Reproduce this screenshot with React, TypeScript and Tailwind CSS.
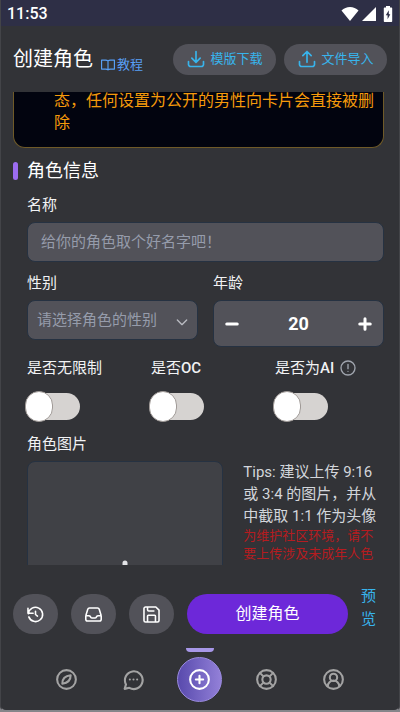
import { useState } from "react";
import type { ReactNode } from "react";

const Icon = ({ className, children }: { className: string; children: ReactNode }) => (
    <svg
        viewBox="0 0 24 24"
        fill="none"
        stroke="currentColor"
        strokeWidth="2"
        strokeLinecap="round"
        strokeLinejoin="round"
        aria-hidden="true"
        className={className}
    >
        {children}
    </svg>
);

const StatusBar = () => (
    <div className="flex h-[26px] shrink-0 items-center justify-between bg-[#2e2f46] px-[6px] pt-[2px] text-white">
        <span className="text-base font-medium leading-6">11:53</span>
        <div className="flex items-center gap-[3px]">
            <svg viewBox="0 0 18 14" className="h-[14px] w-[18px]" fill="currentColor" aria-hidden="true">
                <path d="M9 14 0.5 3.4C2.8 1.3 5.800 0 9 0s6.200 1.300 8.500 3.400z" />
            </svg>
            <svg viewBox="0 0 14 14" className="h-[14px] w-[14px]" fill="currentColor" aria-hidden="true">
                <path d="M14 0v14H0z" />
            </svg>
            <svg viewBox="0 0 10 16" className="ml-1 h-4 w-[10px]" aria-hidden="true">
                <path fill="currentColor" d="M3 0h4v1.500h1.200c.6 0 1 .4 1 1V15c0 .6-.4 1-1 1H1.800c-.6 0-1-.4-1-1V2.500c0-.6.4-1 1-1H3z" />
                <path fill="#2e2f46" d="M5.800 4.200 2.800 9.300h1.800v4L7.300 8.200H5.800z" />
            </svg>
        </div>
    </div>
);

const Header = () => (
    <header className="flex h-[66px] shrink-0 items-center justify-between px-3">
        <div className="flex items-center gap-2">
            <h1 className="text-xl leading-7 text-white">创建角色</h1>
            <a href="#guide" className="mt-3 flex items-center gap-[2px] text-[13px] leading-5 text-[#589ff5]">
                <Icon className="h-[14px] w-[14px]">
                    <path d="M12 5v15M12 5c-1-1-2-1.500-4-1.500H1V19h7c2 0 3 .5 4 1.500 1-1 2-1.500 4-1.500h7V3.500h-7c-2 0-3 .5-4 1.500z" />
                </Icon>
                教程
            </a>
        </div>
        <div className="flex gap-2 text-[13px] leading-5 text-[#38b4ec]">
            <button className="flex h-[31px] w-[103px] items-center justify-center gap-1 rounded-full bg-[#525259]">
                <Icon className="h-5 w-5">
                    <path d="M3 15v3.500A2.500 2.500 0 0 0 5.500 21h13a2.500 2.500 0 0 0 2.500-2.500V15M7 11l5 5 5-5M12 3v13" />
                </Icon>
                模版下载
            </button>
            <button className="flex h-[31px] w-[103px] items-center justify-center gap-1 rounded-full bg-[#525259]">
                <Icon className="h-5 w-5">
                    <path d="M3 15v3.500A2.500 2.500 0 0 0 5.500 21h13a2.500 2.500 0 0 0 2.500-2.500V15M7 8l5-5 5 5M12 3v13" />
                </Icon>
                文件导入
            </button>
        </div>
    </header>
);

const Toggle = ({ id, label, children }: { id: string; label: ReactNode; children?: ReactNode }) => (
    <div>
        <div className="flex items-center gap-[6px]">
            <label htmlFor={id} className="whitespace-nowrap">{label}</label>
            {children}
        </div>
        <input
            id={id}
            type="checkbox"
            className="mt-[13px] block h-[27px] w-[53px] appearance-none rounded-full bg-[#d6d3d1] before:-ml-[2px] before:-mt-[2px] before:block before:h-[31px] before:w-7 before:rounded-full before:border before:border-[#a09a97] before:bg-white checked:bg-violet-500 checked:before:ml-[27px]"
        />
    </div>
);

const CharacterForm = () => {
    const [age, setAge] = useState(20);

    return (
        <section className="pt-[9px]">
            <h2 className="flex h-7 items-center gap-[9px] text-lg leading-7 text-white">
                <span className="h-[18px] w-[5px] rounded-full bg-[#9c6cf0]" />
                角色信息
            </h2>

            <div className="pl-[14px] text-[15px] leading-6 text-[#f1f2f4]">
                <label htmlFor="name" className="mt-2 block">名称</label>
                <input
                    id="name"
                    type="text"
                    placeholder="给你的角色取个好名字吧！"
                    className="mt-[5px] block h-10 w-full rounded-lg border border-[#263242] bg-[#525259] px-[13px] placeholder:text-[#969cab]"
                />

                <div className="mt-[9px] grid grid-cols-2 gap-[15px]">
                    <div>
                        <label htmlFor="gender" className="block">性别</label>
                        <div className="relative mt-[5px]">
                            <select
                                id="gender"
                                defaultValue=""
                                className="block h-10 w-full appearance-none rounded-lg border border-[#263242] bg-[#525259] pl-[9px] pr-7 text-[#969cab]"
                            >
                                <option value="">请选择角色的性别</option>
                                <option value="male">男</option>
                                <option value="female">女</option>
                            </select>
                            <Icon className="pointer-events-none absolute right-2 top-[14px] h-4 w-4 text-[#b9bbc2]">
                                <path d="m5 9 7 7 7-7" />
                            </Icon>
                        </div>
                    </div>
                    <div>
                        <label htmlFor="age" className="block">年龄</label>
                        <div className="mt-[5px] flex h-[47px] items-center justify-between rounded-lg border border-[#263242] bg-[#525259] px-[9px] text-white">
                            <button aria-label="减少" onClick={() => setAge(age - 1)}>
                                <Icon className="h-[18px] w-[18px]">
                                    <path strokeWidth="4" d="M5 12h14" />
                                </Icon>
                            </button>
                            <input
                                id="age"
                                type="text"
                                inputMode="numeric"
                                value={age}
                                onChange={(e) => setAge(Number(e.target.value) || 0)}
                                className="w-16 bg-transparent text-center text-lg font-bold"
                            />
                            <button aria-label="增加" onClick={() => setAge(age + 1)}>
                                <Icon className="h-[18px] w-[18px]">
                                    <path strokeWidth="4" d="M5 12h14M12 5v14" />
                                </Icon>
                            </button>
                        </div>
                    </div>
                </div>

                <div className="mt-[9px] grid grid-cols-3 gap-[15px]">
                    <Toggle id="unlimited" label="是否无限制" />
                    <Toggle id="oc" label={<>是否<span className="font-medium">OC</span></>} />
                    <Toggle id="ai" label={<>是否为<span className="font-medium">AI</span></>}>
                        <Icon className="h-4 w-4 shrink-0 text-[#a0a5ae]">
                            <circle cx="12" cy="12" r="10.500" />
                            <path d="M12 6.500v6.500M12 17v.01" />
                        </Icon>
                    </Toggle>
                </div>

                <h3 className="mt-3">角色图片</h3>
                <div className="mt-[5px] flex gap-5">
                    <button
                        aria-label="上传图片"
                        className="flex h-[240px] w-[55%] shrink-0 items-center justify-center rounded-lg border border-[#263242] bg-[#404146] text-[#e2e3e6]"
                    >
                        <svg viewBox="0 0 44 44" className="h-11 w-11" stroke="currentColor" strokeWidth="5" strokeLinecap="round" aria-hidden="true">
                            <path d="M22 4v36M4 22h36" />
                        </svg>
                    </button>
                    <div className="whitespace-nowrap text-[#d3d6db]">
                        <p className="leading-[22px]">
                            Tips: 建议上传 9:16
                            <br />
                            或 3:4 的图片，并从
                            <br />
                            中截取 1:1 作为头像
                        </p>
                        <p className="text-[13px] leading-[18px] text-[#b51c20]">
                            为维护社区环境，请不
                            <br />
                            要上传涉及未成年人色
                        </p>
                    </div>
                </div>
            </div>
        </section>
    );
};

const ActionBar = () => (
    <div className="flex h-[83px] shrink-0 items-end gap-[13px] px-3 pb-[14px] pt-5 text-base text-white">
        <button aria-label="历史" className="flex h-10 w-[45px] items-center justify-center rounded-full bg-[#525259]">
            <Icon className="h-[19px] w-[19px]">
                <path d="M12 8v4l2.500 2M3.050 11a9 9 0 1 1 .5 4M2.500 4v6.500H9" />
            </Icon>
        </button>
        <button aria-label="草稿箱" className="flex h-10 w-[45px] items-center justify-center rounded-full bg-[#525259]">
            <Icon className="h-[19px] w-[19px]">
                <path d="M2.250 13.500h3.860a2.250 2.250 0 0 1 2 1.240l.26.520a2.250 2.250 0 0 0 2 1.240h3.260a2.250 2.250 0 0 0 2-1.240l.26-.520a2.250 2.250 0 0 1 2-1.240h3.860M2.250 13.800V18a2.250 2.250 0 0 0 2.250 2.250h15A2.250 2.250 0 0 0 21.750 18v-4.200c0-.23-.03-.45-.1-.66L19.240 5.300A2.250 2.250 0 0 0 17.090 3.750H6.910A2.250 2.250 0 0 0 4.760 5.300L2.350 13.140c-.07.21-.1.430-.1.660z" />
            </Icon>
        </button>
        <button aria-label="保存" className="flex h-10 w-[45px] items-center justify-center rounded-full bg-[#525259]">
            <Icon className="h-[19px] w-[19px]">
                <path d="M17.500 2.500H4.500a2 2 0 0 0-2 2v15a2 2 0 0 0 2 2h15a2 2 0 0 0 2-2V6.500zM7 21.500v-7.500a1 1 0 0 1 1-1h8a1 1 0 0 1 1 1v7.500M7 2.500V6a1.500 1.500 0 0 0 1.500 1.500H15" />
            </Icon>
        </button>
        <button className="h-10 flex-1 rounded-full bg-[#6d28d9] leading-6">创建角色</button>
        <button className="w-[26px] self-start pr-[9px] text-left text-[15px] leading-[23px] text-[#38b4ec]">预览</button>
    </div>
);

const BottomNav = () => (
    <nav className="grid h-[62px] shrink-0 grid-cols-5 justify-items-center px-8 text-[#a3a3a3]">
        <a href="#explore" aria-label="探索" className="flex items-center">
            <Icon className="h-[25px] w-[25px]">
                <path d="M8 16c0-5 2.500-7.500 8-8 0 5-2.500 7.500-8 8z" />
                <circle cx="12" cy="12" r="9" />
            </Icon>
        </a>
        <a href="#chat" aria-label="聊天" className="flex items-center">
            <Icon className="h-[25px] w-[25px]">
                <path d="M3.500 21l1.300-4.300A8.500 8.500 0 1 1 8 20zM8.500 12v.01M12 12v.01M15.500 12v.01" />
            </Icon>
        </a>
        <a href="#create" aria-label="创建" aria-current="page" className="flex flex-col items-center gap-[5px]">
            <span className="h-1 w-7 rounded-b-full bg-[#a797e8]" />
            <span className="flex h-[45px] w-[45px] items-center justify-center rounded-full border border-[#9b8be0] bg-gradient-to-r from-[#594aad] to-[#9380d8] text-white">
                <Icon className="h-[25px] w-[25px]">
                    <circle cx="12" cy="12" r="9" />
                    <path d="M8.500 12h7M12 8.500v7" />
                </Icon>
            </span>
        </a>
        <a href="#support" aria-label="帮助" className="flex items-center">
            <Icon className="h-[25px] w-[25px]">
                <circle cx="12" cy="12" r="9" />
                <circle cx="12" cy="12" r="4" />
                <path d="m15 15 3.350 3.350M9 15l-3.350 3.350M5.650 5.650 9 9M18.350 5.650 15 9" />
            </Icon>
        </a>
        <a href="#me" aria-label="我的" className="flex items-center">
            <Icon className="h-[25px] w-[25px]">
                <circle cx="12" cy="12" r="9" />
                <circle cx="12" cy="10" r="3.500" />
                <path d="M6.500 18.500a5.500 5.500 0 0 1 11 0" />
            </Icon>
        </a>
    </nav>
);

export default function App() {
    return (
        <div className="h-screen bg-[#85858a] font-['Roboto','Noto_Sans_CJK_SC',sans-serif]">
            <div className="flex h-full flex-col overflow-hidden rounded-b-md border-x border-b-2 border-x-[#434448] border-b-[#85858a] bg-[#323337]">
                <StatusBar />
                <Header />
                <main className="min-h-0 flex-1 overflow-hidden pl-3 pr-[15px]">
                    <div className="-mt-[2px] whitespace-nowrap rounded-b-xl border border-t-0 border-[#6f5a28] bg-[#02040f] pb-[13px] pl-10 text-base leading-[22px] text-[#f59a0b]">
                        态，任何设置为公开的男性向卡片会直接被删
                        <br />除
                    </div>
                    <CharacterForm />
                </main>
                <ActionBar />
                <BottomNav />
            </div>
        </div>
    );
}
